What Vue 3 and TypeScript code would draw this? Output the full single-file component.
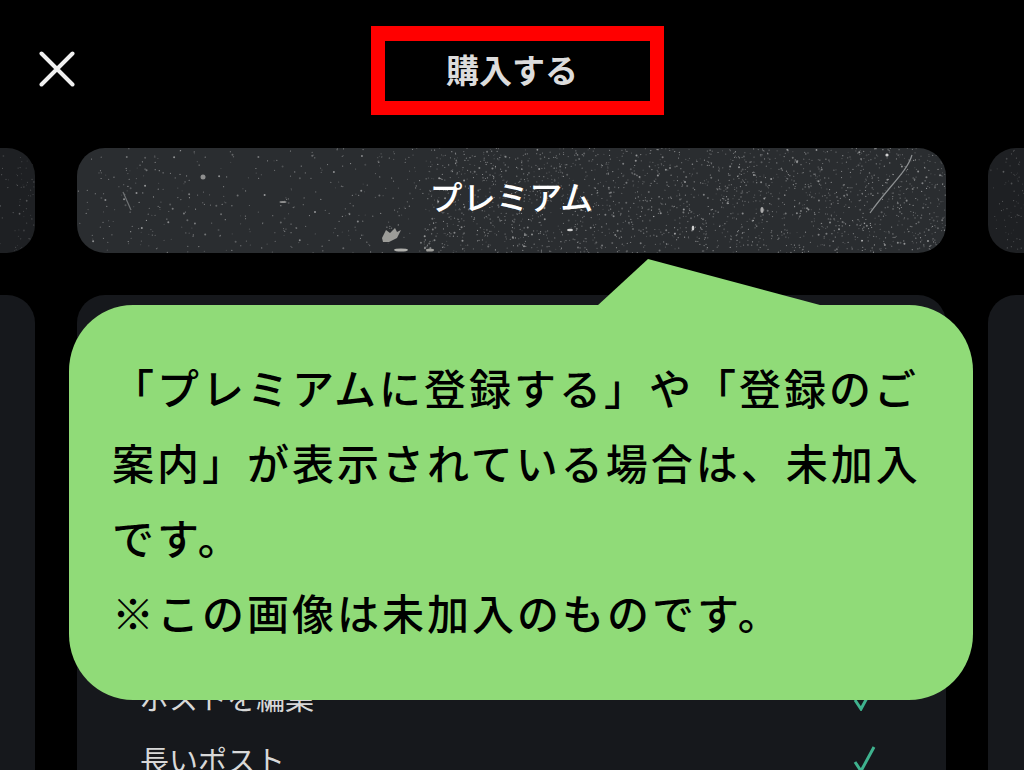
<script setup lang="ts">
interface Speck { x: number; y: number; r: number; o: number }

function specks(seed: number, w: number, h: number, count: number): Speck[] {
  let s = seed
  const rnd = () => {
    s = (s * 16807) % 2147483647
    return s / 2147483647
  }
  const list: Speck[] = []
  for (let i = 0; i < count; i++) {
    const big = rnd() > 0.9
    // the right half of the tab carries denser dust than the left half
    const bias = rnd()
    const x = bias > 0.35 ? w * (0.4 + rnd() * 0.6) : rnd() * w
    list.push({ x, y: rnd() * h, r: big ? 1 : 0.6, o: 0.12 + rnd() * 0.4 })
  }
  return list
}

const mainSpecks = specks(4711, 869, 105, 2600)
const leftSpecks = specks(97, 40, 105, 70)
const rightSpecks = specks(1234, 40, 105, 70)
</script>

<template>
  <main class="screen">
    <header class="topbar">
      <button class="close" aria-label="閉じる">
        <svg width="36" height="36" viewBox="0 0 36 36">
          <path d="M2.5 2.5 L33.5 33.5 M33.5 2.5 L2.5 33.5" stroke="#f0f0f0" stroke-width="4" stroke-linecap="round" fill="none" />
        </svg>
      </button>
      <h1 class="title">購入する</h1>
    </header>

    <section class="plans">
      <div class="tab side side-left">
        <svg class="grain" viewBox="0 0 40 105" preserveAspectRatio="none">
          <circle v-for="(p, i) in leftSpecks" :key="i" :cx="p.x" :cy="p.y" :r="p.r" fill="#fff" :fill-opacity="p.o * 0.6" />
        </svg>
      </div>
      <div class="tab center">
        <svg class="grain" viewBox="0 0 869 105" preserveAspectRatio="none">
          <circle v-for="(p, i) in mainSpecks" :key="i" :cx="p.x" :cy="p.y" :r="p.r" fill="#fff" :fill-opacity="p.o" />
          <path d="M835 7 C830 24 812 38 793 65" stroke="#8d9092" stroke-width="1.2" fill="none" />
          <path d="M46 44 L54 62" stroke="#6f7274" stroke-width="1.2" fill="none" />
          <path d="M305 90 L309 82 L313 85 L318 80 L320 84 L324 82 L320 90 L312 94 L306 94 Z" fill="#9c9c98" />
          <ellipse cx="324" cy="102" rx="7" ry="1.6" fill="#b0b0ac" />
          <ellipse cx="353" cy="102" rx="4" ry="1.5" fill="#9f9f9b" />
          <ellipse cx="126" cy="29" rx="2.5" ry="2.5" fill="#8f8f8f" />
          <ellipse cx="206" cy="54" rx="3.5" ry="1" fill="#8f8f8f" />
          <ellipse cx="493" cy="82" rx="3" ry="1.3" fill="#d0d0d0" />
          <ellipse cx="616" cy="80" rx="1.3" ry="2.6" fill="#d0d0d0" />
          <ellipse cx="685" cy="62" rx="1.6" ry="3" fill="#a9a9a9" />
          <ellipse cx="810" cy="7" rx="1.6" ry="1.6" fill="#d0d0d0" />
        </svg>
        <span class="tab-label">プレミアム</span>
      </div>
      <div class="tab side side-right">
        <svg class="grain" viewBox="0 0 40 105" preserveAspectRatio="none">
          <circle v-for="(p, i) in rightSpecks" :key="i" :cx="p.x" :cy="p.y" :r="p.r" fill="#fff" :fill-opacity="p.o * 0.6" />
        </svg>
      </div>
    </section>

    <section class="panels">
      <div class="panel side side-left"></div>
      <div class="panel center">
        <div class="row">
          <span>ポストを編集</span>
          <svg class="check" width="24" height="28" viewBox="0 0 24 28">
            <path d="M2 17 L8 26 L21 2" stroke="#3fb28e" stroke-width="3" fill="none" />
          </svg>
        </div>
        <div class="row">
          <span>長いポスト</span>
          <svg class="check" width="24" height="28" viewBox="0 0 24 28">
            <path d="M2 17 L8 26 L21 2" stroke="#3fb28e" stroke-width="3" fill="none" />
          </svg>
        </div>
      </div>
      <div class="panel side side-right"></div>
    </section>

    <div class="highlight" aria-hidden="true"></div>

    <aside class="bubble">
      <svg class="tail" width="223" height="47" viewBox="0 0 223 47">
        <polygon points="0,47 51,0 223,46 223,47" fill="#90db78" />
      </svg>
      <p>「プレミアムに登録する」や「登録のご案内」が表示されている場合は、未加入です。<br />※この画像は未加入のものです。</p>
    </aside>
  </main>
</template>

<style>
html,
body {
  margin: 0;
  background: #000;
}
</style>

<style scoped>
.screen {
  position: relative;
  width: 1024px;
  height: 770px;
  overflow: hidden;
  background: #000;
  font-family: "Noto Sans CJK JP", "Noto Sans", sans-serif;
  color: #fff;
}
.topbar {
  position: relative;
  height: 148px;
  display: flex;
  justify-content: center;
}
.close {
  position: absolute;
  left: 39px;
  top: 51px;
  width: 36px;
  height: 36px;
  padding: 0;
  border: 0;
  background: none;
}
.title {
  margin: 50px 0 0;
  font-size: 33px;
  line-height: 38px;
  font-weight: 700;
  color: #dcdcdc;
}
.plans,
.panels {
  display: grid;
  grid-template-columns: 35px 869px 36px;
  column-gap: 42px;
  justify-content: start;
}
.plans {
  height: 105px;
  margin-bottom: 42px;
}
.tab {
  position: relative;
  overflow: hidden;
  border-radius: 28px;
  background: #2a2d30;
  display: flex;
  align-items: center;
  justify-content: center;
}
.tab.side {
  background: #1e2023;
}
.side-left {
  border-top-left-radius: 0;
  border-bottom-left-radius: 0;
}
.side-right {
  border-top-right-radius: 0;
  border-bottom-right-radius: 0;
}
.grain {
  position: absolute;
  inset: 0;
  width: 100%;
  height: 100%;
  filter: blur(0.5px);
}
.tab-label {
  position: relative;
  padding-bottom: 10px;
  font-size: 33px;
  letter-spacing: 0.3px;
  font-weight: 500;
}
.panels {
  height: 475px;
}
.panel {
  border-radius: 28px 28px 0 0;
  background: #16181c;
}
.panel.side-left {
  border-top-left-radius: 0;
}
.panel.side-right {
  border-top-right-radius: 0;
}
.panel.center {
  display: flex;
  flex-direction: column;
  padding: 371px 69px 0 63px;
  color: #d8d8d8;
}
.row {
  height: 62px;
  display: flex;
  align-items: center;
  justify-content: space-between;
  font-size: 29px;
  font-weight: 400;
}
.highlight {
  position: absolute;
  left: 371px;
  top: 26px;
  width: 293px;
  height: 89px;
  box-sizing: border-box;
  border: 14px solid #ff0000;
  border-top-width: 15px;
}
.bubble {
  position: absolute;
  left: 69px;
  top: 305px;
  width: 904px;
  height: 395px;
  box-sizing: border-box;
  padding: 44px 46px 0 43px;
  background: #90db78;
  border-radius: 64px / 66px;
  color: #000;
}
.tail {
  position: absolute;
  left: 528px;
  top: -46px;
}
.bubble p {
  margin: 0;
  font-size: 42px;
  line-height: 75px;
  letter-spacing: 3px;
  font-weight: 500;
}
</style>
